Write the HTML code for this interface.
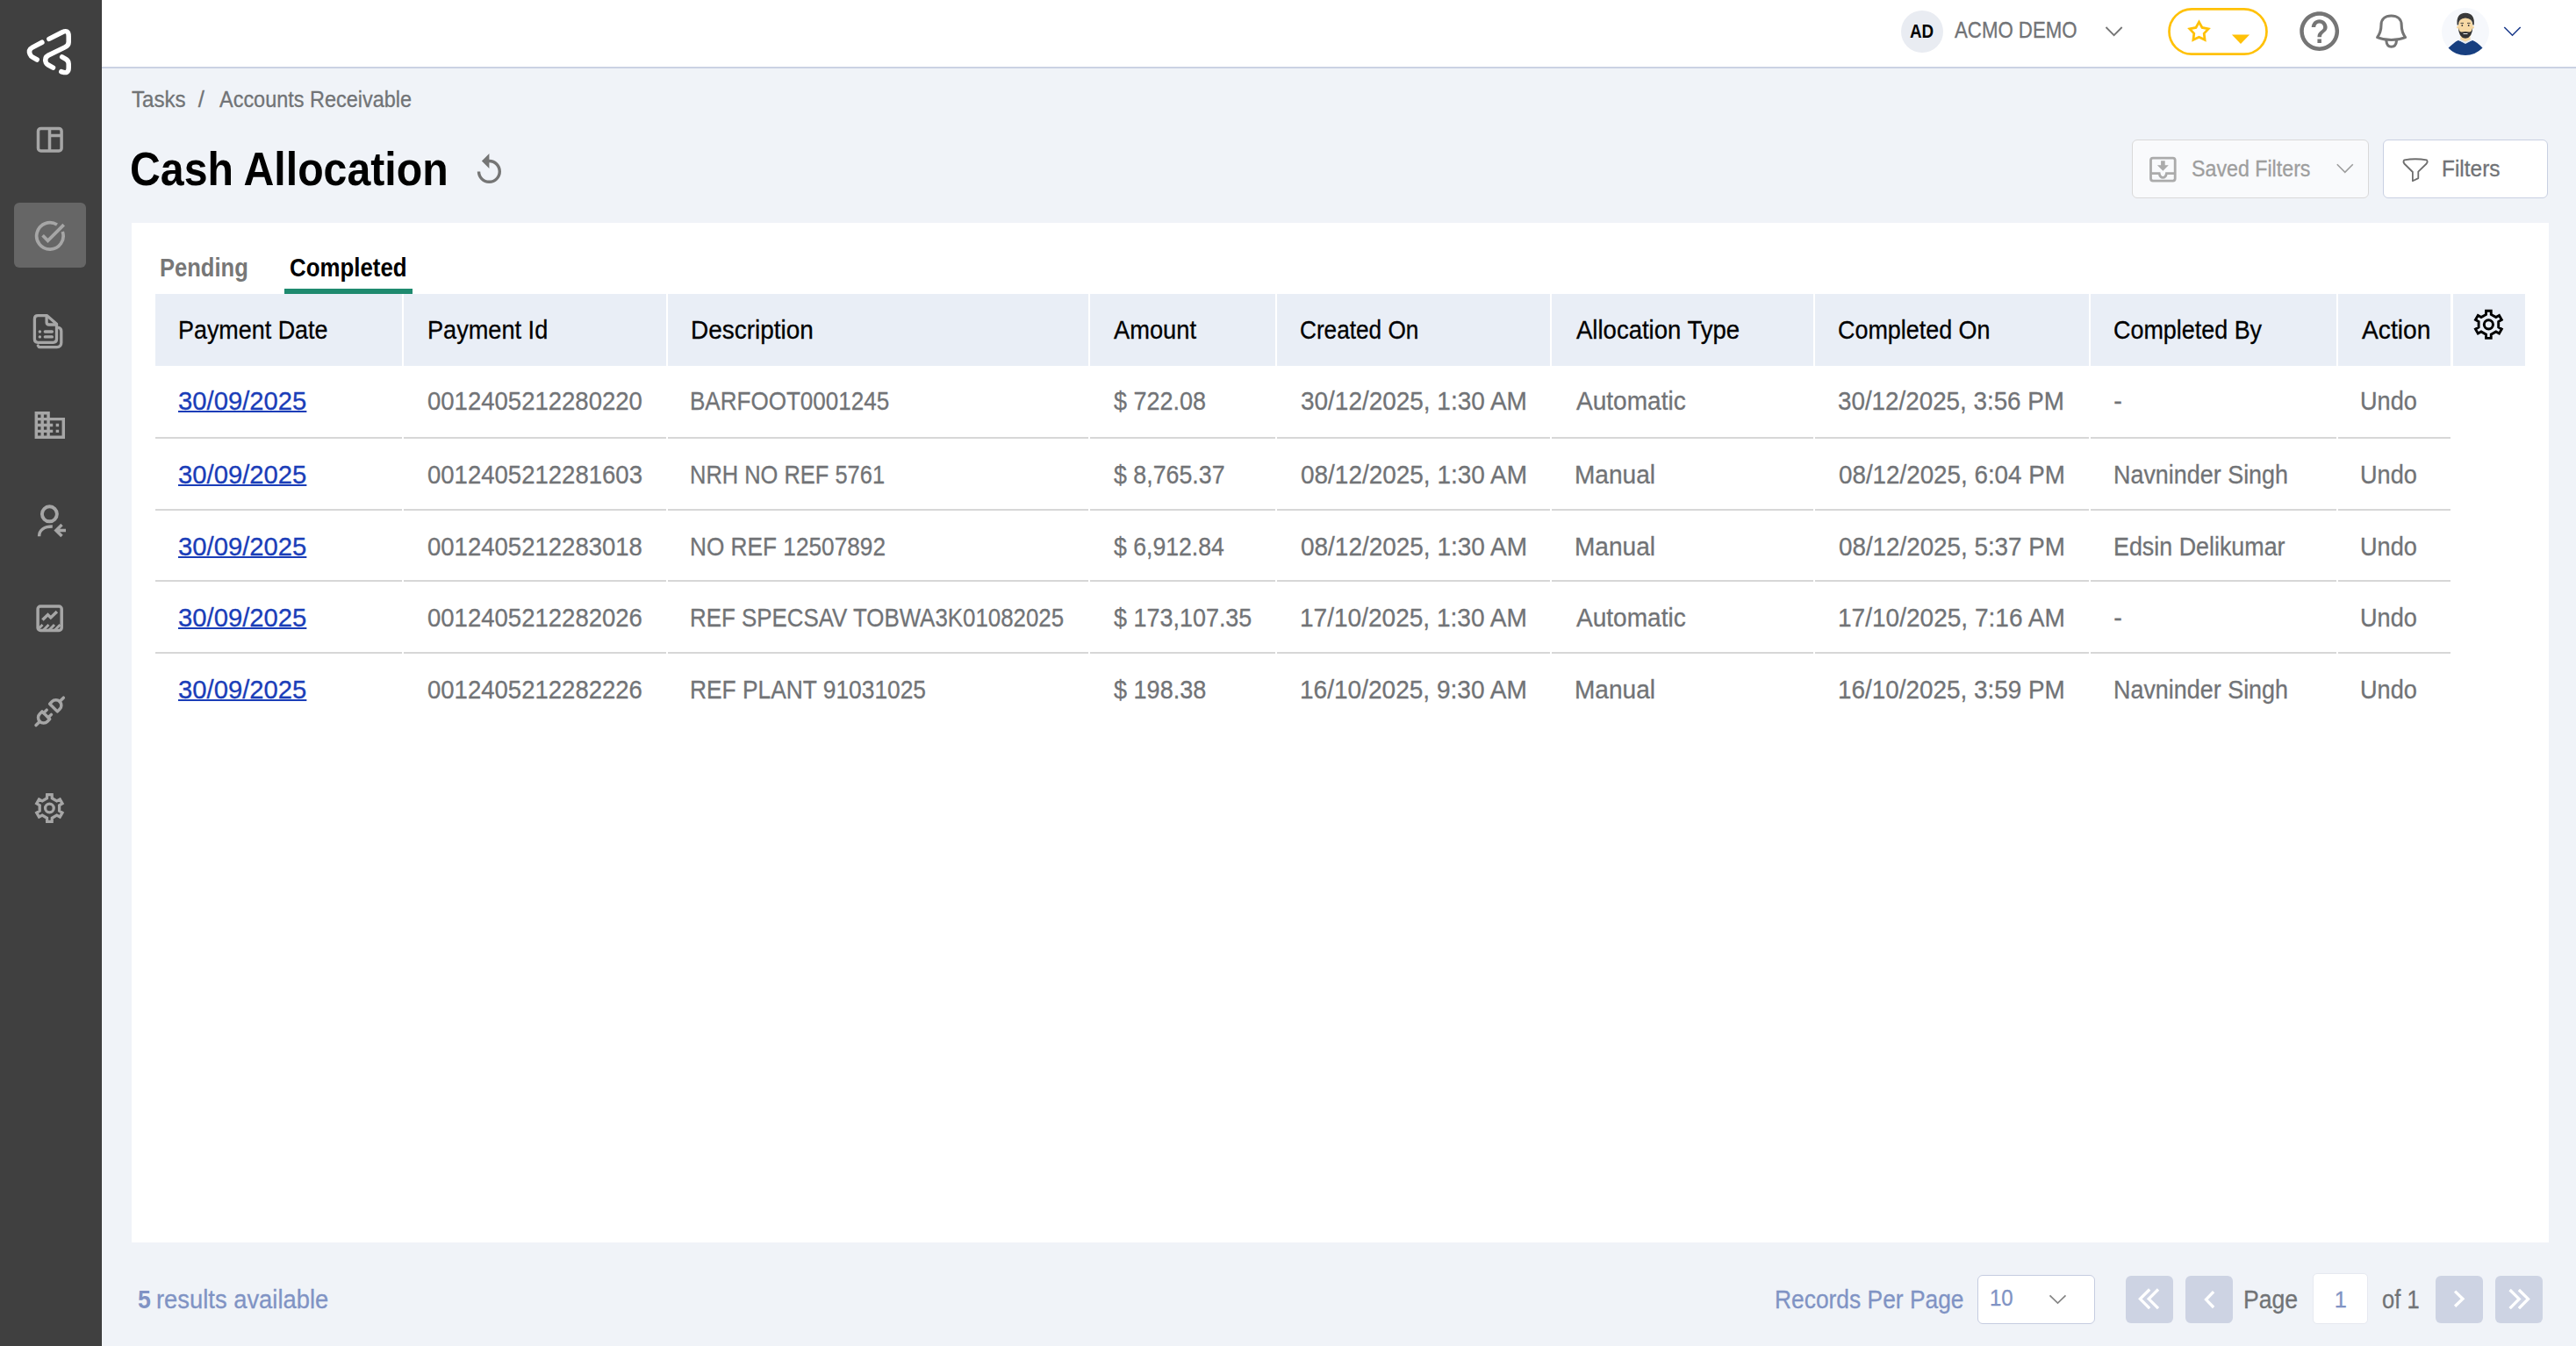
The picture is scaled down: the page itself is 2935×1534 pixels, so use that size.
<!DOCTYPE html>
<html><head><meta charset="utf-8"><title>Cash Allocation</title>
<style>
html,body{margin:0;padding:0;}
body{width:2935px;height:1534px;overflow:hidden;background:#F0F3F8;position:relative;font-family:"Liberation Sans",sans-serif;}
.a{position:absolute;}
.t{position:absolute;white-space:nowrap;line-height:1;transform-origin:0 0;font-family:"Liberation Sans",sans-serif;}
svg{position:absolute;left:0;top:0;overflow:visible;}
</style></head><body>
<!-- sidebar -->
<div class="a" style="left:0;top:0;width:116px;height:1534px;background:#404040;"></div>
<div class="a" style="left:115px;top:0;width:1px;height:1534px;background:#393939;"></div>
<div class="a" style="left:16px;top:231px;width:82px;height:74px;background:#666666;border-radius:6px;"></div>
<!-- header -->
<div class="a" style="left:116px;top:0;width:2819px;height:76px;background:#fff;"></div>
<div class="a" style="left:116px;top:76px;width:2819px;height:2px;background:#CBD2E3;"></div>
<!-- buttons -->
<div class="a" style="left:2429px;top:159px;width:268px;height:65px;background:#F9FAFC;border:1.5px solid #D9D9D9;border-radius:6px;"></div>
<div class="a" style="left:2715px;top:159px;width:186px;height:65px;background:#fff;border:1.5px solid #C9D0E2;border-radius:6px;"></div>
<!-- card -->
<div class="a" style="left:150px;top:254px;width:2754px;height:1162px;background:#fff;"></div>
<!-- tab underline -->
<div class="a" style="left:324px;top:329px;width:146px;height:5.5px;background:#1E8A6F;"></div>
<div class="a" style="left:177px;top:335px;width:2700px;height:82px;background:#E9EEF6;"></div>
<div class="a" style="left:458px;top:335px;width:2px;height:82px;background:#fff;"></div>
<div class="a" style="left:759px;top:335px;width:2px;height:82px;background:#fff;"></div>
<div class="a" style="left:1240px;top:335px;width:2px;height:82px;background:#fff;"></div>
<div class="a" style="left:1453px;top:335px;width:2px;height:82px;background:#fff;"></div>
<div class="a" style="left:1766px;top:335px;width:2px;height:82px;background:#fff;"></div>
<div class="a" style="left:2066px;top:335px;width:2px;height:82px;background:#fff;"></div>
<div class="a" style="left:2380px;top:335px;width:2px;height:82px;background:#fff;"></div>
<div class="a" style="left:2662px;top:335px;width:2px;height:82px;background:#fff;"></div>
<div class="a" style="left:2792px;top:335px;width:3px;height:82px;background:#fff;"></div>
<div class="a" style="left:177px;top:497.85px;width:2615px;height:1.7px;background:#D7D7D7;"></div>
<div class="a" style="left:458px;top:497.20px;width:2px;height:3px;background:#fff;"></div>
<div class="a" style="left:759px;top:497.20px;width:2px;height:3px;background:#fff;"></div>
<div class="a" style="left:1240px;top:497.20px;width:2px;height:3px;background:#fff;"></div>
<div class="a" style="left:1453px;top:497.20px;width:2px;height:3px;background:#fff;"></div>
<div class="a" style="left:1766px;top:497.20px;width:2px;height:3px;background:#fff;"></div>
<div class="a" style="left:2066px;top:497.20px;width:2px;height:3px;background:#fff;"></div>
<div class="a" style="left:2380px;top:497.20px;width:2px;height:3px;background:#fff;"></div>
<div class="a" style="left:2662px;top:497.20px;width:2px;height:3px;background:#fff;"></div>
<div class="a" style="left:177px;top:580.15px;width:2615px;height:1.7px;background:#D7D7D7;"></div>
<div class="a" style="left:458px;top:579.50px;width:2px;height:3px;background:#fff;"></div>
<div class="a" style="left:759px;top:579.50px;width:2px;height:3px;background:#fff;"></div>
<div class="a" style="left:1240px;top:579.50px;width:2px;height:3px;background:#fff;"></div>
<div class="a" style="left:1453px;top:579.50px;width:2px;height:3px;background:#fff;"></div>
<div class="a" style="left:1766px;top:579.50px;width:2px;height:3px;background:#fff;"></div>
<div class="a" style="left:2066px;top:579.50px;width:2px;height:3px;background:#fff;"></div>
<div class="a" style="left:2380px;top:579.50px;width:2px;height:3px;background:#fff;"></div>
<div class="a" style="left:2662px;top:579.50px;width:2px;height:3px;background:#fff;"></div>
<div class="a" style="left:177px;top:661.25px;width:2615px;height:1.7px;background:#D7D7D7;"></div>
<div class="a" style="left:458px;top:660.60px;width:2px;height:3px;background:#fff;"></div>
<div class="a" style="left:759px;top:660.60px;width:2px;height:3px;background:#fff;"></div>
<div class="a" style="left:1240px;top:660.60px;width:2px;height:3px;background:#fff;"></div>
<div class="a" style="left:1453px;top:660.60px;width:2px;height:3px;background:#fff;"></div>
<div class="a" style="left:1766px;top:660.60px;width:2px;height:3px;background:#fff;"></div>
<div class="a" style="left:2066px;top:660.60px;width:2px;height:3px;background:#fff;"></div>
<div class="a" style="left:2380px;top:660.60px;width:2px;height:3px;background:#fff;"></div>
<div class="a" style="left:2662px;top:660.60px;width:2px;height:3px;background:#fff;"></div>
<div class="a" style="left:177px;top:743.15px;width:2615px;height:1.7px;background:#D7D7D7;"></div>
<div class="a" style="left:458px;top:742.50px;width:2px;height:3px;background:#fff;"></div>
<div class="a" style="left:759px;top:742.50px;width:2px;height:3px;background:#fff;"></div>
<div class="a" style="left:1240px;top:742.50px;width:2px;height:3px;background:#fff;"></div>
<div class="a" style="left:1453px;top:742.50px;width:2px;height:3px;background:#fff;"></div>
<div class="a" style="left:1766px;top:742.50px;width:2px;height:3px;background:#fff;"></div>
<div class="a" style="left:2066px;top:742.50px;width:2px;height:3px;background:#fff;"></div>
<div class="a" style="left:2380px;top:742.50px;width:2px;height:3px;background:#fff;"></div>
<div class="a" style="left:2662px;top:742.50px;width:2px;height:3px;background:#fff;"></div>
<!-- footer controls -->
<div class="a" style="left:2253px;top:1452.5px;width:131.5px;height:54px;background:#fff;border:1.5px solid #C5CCE0;border-radius:6px;"></div>
<div class="a" style="left:2422px;top:1454px;width:53.5px;height:53.5px;background:#CDD3E3;border-radius:6px;"></div>
<div class="a" style="left:2490px;top:1454px;width:53.5px;height:53.5px;background:#CDD3E3;border-radius:6px;"></div>
<div class="a" style="left:2634.5px;top:1451px;width:63px;height:58px;background:#fff;border:1px solid #E6E9F0;border-radius:5px;box-sizing:border-box;"></div>
<div class="a" style="left:2775px;top:1454px;width:53.5px;height:53.5px;background:#CDD3E3;border-radius:6px;"></div>
<div class="a" style="left:2843px;top:1454px;width:53.5px;height:53.5px;background:#CDD3E3;border-radius:6px;"></div>
<svg width="116" height="100" viewBox="0 0 116 100"><g fill="none" stroke="#fff" stroke-width="5.5" stroke-linecap="round" stroke-linejoin="round" transform="translate(0.3 0.8)"><path d="M47.6 47.4 L36.5 53.3 Q31.6 56 34 61.3 Q34.8 63.3 36.8 64.4 L41.9 67.2"/><path d="M55.6 43.6 L70.6 35.9 Q77.9 32.4 77.9 40.4 L77.9 47.1 Q77.9 50.9 73.6 53.1 L54.9 62.2 Q49.8 65 52.1 70.8 Q52.8 72.2 54.6 73.2 L60.2 76.4"/><path d="M70.4 64 L75.1 66.8 Q77.9 68.6 77.9 72 L77.9 76.4 Q77.9 83.3 70.9 81.4 L69.5 80.8"/></g></svg>
<svg width="116" height="1000"><g fill="none" stroke="#A6A6A6" stroke-width="3.5"><rect x="43.5" y="146.4" width="26.6" height="25.5" rx="3"/><path d="M56.5 146.4 V171.9 M56.5 154.6 H70.1"/><path d="M71.28 263.98 A15.2 15.2 0 1 1 65.0 256.04" stroke-width="3.7"/><path d="M48.6 268.2 L54.5 274.3 L72.7 256.1" stroke-width="3.7"/><path d="M53.3 359.6 H43.2 Q39.4 359.6 39.4 363.4 V386.5 Q39.4 390.3 43.2 390.3 H60.7 Q64.5 390.3 64.5 386.5 V369.2 Z" stroke-width="3.3" stroke-linejoin="round"/><path d="M53.1 359.8 V367.2 Q53.1 370 55.9 370 H64.3" stroke-width="3.3"/><path d="M66.6 373.3 Q69.8 373.9 69.8 377.5 V390.6 Q69.8 395.6 64.8 395.6 H45.6 Q43.9 395.6 43.3 394" stroke-width="3.3" stroke-linecap="round"/><path d="M45.3 378 H45.5 M45.3 383.9 H45.5 M51.3 378 H59.4 M51.3 383.9 H59.4" stroke-width="3.3" stroke-linecap="round"/><circle cx="56.4" cy="585.8" r="8.5" stroke-width="3.9"/><path d="M44.6 611.2 C44.6 604 50.5 599.9 59.8 599.9" stroke-width="3.5"/><path d="M70.5 597.9 L63.9 604.4 L70.5 611 M63.9 604.4 H75" stroke-width="3.5"/><rect x="43.1" y="691.1" width="27.1" height="27.3" rx="3"/><path d="M48.4 706.6 L54.5 700.6 L57.8 703.9 L64.9 697" stroke-width="3.5"/><path d="M44.5 716 L48.5 712 M49.5 718 L55.5 712 M56 718 L62 712 M62.5 718 L68.5 712" stroke-width="3"/><g transform="translate(35.8 790) scale(1.74)" stroke-width="2" stroke-linecap="round" stroke-linejoin="round"><path d="M7 12l5 5l-1.5 1.5a3.536 3.536 0 1 1 -5 -5l1.5 -1.5z"/><path d="M17 12l-5 -5l1.5 -1.5a3.536 3.536 0 1 1 5 5l-1.5 1.5z"/><path d="M3 21l2.5 -2.5"/><path d="M18.5 5.5l2.5 -2.5"/><path d="M10 11l-2 2"/><path d="M13 14l-2 2"/></g><path d="M53.65 905.70 L59.15 905.70 L59.32 909.75 L64.68 912.85 L68.28 910.97 L71.03 915.73 L67.60 917.90 L67.60 924.10 L71.03 926.27 L68.28 931.03 L64.68 929.15 L59.32 932.25 L59.15 936.30 L53.65 936.30 L53.48 932.25 L48.12 929.15 L44.52 931.03 L41.77 926.27 L45.20 924.10 L45.20 917.90 L41.77 915.73 L44.52 910.97 L48.12 912.85 L53.48 909.75 Z" stroke-width="3.3" stroke-linejoin="miter"/><circle cx="56.4" cy="921" r="4.85" stroke-width="3.3"/></g><g transform="translate(36.16 463.84) scale(1.72)"><path fill="#A6A6A6" d="M12 7V3H2v18h20V7H12zM6 19H4v-2h2v2zm0-4H4v-2h2v2zm0-4H4V9h2v2zm0-4H4V5h2v2zm4 12H8v-2h2v2zm0-4H8v-2h2v2zm0-4H8V9h2v2zm0-4H8V5h2v2zm10 12h-8v-2h2v-2h-2v-2h2v-2h-2V9h8v10zm-2-8h-2v2h2v-2zm0 4h-2v2h2v-2z"/></g></svg>
<svg width="2935" height="1534"><circle cx="2190" cy="36" r="24" fill="#E9ECF2"/><path d="M2399.5 31 L2408.6 40.2 L2417.7 31" fill="none" stroke="#757575" stroke-width="1.8"/><rect x="2471.5" y="10.4" width="111" height="51.2" rx="25.6" fill="#fff" stroke="#FFC107" stroke-width="2.7"/><path d="M2505.50 25.10 L2509.03 31.45 L2516.15 32.84 L2511.21 38.15 L2512.08 45.36 L2505.50 42.30 L2498.92 45.36 L2499.79 38.15 L2494.85 32.84 L2501.97 31.45 Z" fill="none" stroke="#FFC107" stroke-width="2.8" stroke-linejoin="miter" stroke-miterlimit="6"/><path d="M2542.9 39.6 L2563.1 39.6 L2553 50.1 Z" fill="#FFC107"/><g transform="translate(2615.8 8.7) scale(2.24)"><path fill="#757575" d="M11 18h2v-2h-2v2zm1-16C6.48 2 2 6.48 2 12s4.48 10 10 10 10-4.48 10-10S17.52 2 12 2zm0 18c-4.41 0-8-3.59-8-8s3.59-8 8-8 8 3.59 8 8-3.59 8-8 8zm0-14c-2.21 0-4 1.79-4 4h2c0-1.1.9-2 2-2s2 .9 2 2c0 2-3 1.75-3 5h2c0-2.25 3-2.5 3-5 0-2.21-1.79-4-4-4z"/></g><g fill="none" stroke="#757575" stroke-width="3.1" stroke-linejoin="round"><path d="M2708.6 42.6 C2712.3 37.5 2713 34 2713 28.5 C2713 21.5 2717.8 18 2724.5 18 C2731.2 18 2736.2 21.5 2736.2 28.5 C2736.2 34 2736.9 37.5 2740.6 42.6 C2731 46.4 2718.2 46.4 2708.6 42.6 Z"/><path d="M2718.8 46 C2719.2 51 2721.2 53.3 2724.6 53.3 C2728 53.3 2730.2 51 2730.6 46"/></g><defs><clipPath id="avc"><circle cx="2809" cy="36" r="27"/></clipPath></defs><circle cx="2809" cy="36" r="27" fill="#F6F8FC"/><g clip-path="url(#avc)"><path d="M2787 57 Q2798 46.5 2801 46 L2809 49 L2817 46 Q2821 46.5 2831 57 Q2822 64 2809 64 Q2796 64 2787 57 Z" fill="#173F80"/><path d="M2801.5 46 L2805 42 H2813 L2816.5 46 L2809 50 Z" fill="#E4EAF3"/><path d="M2803.5 40 H2814.5 V45 L2809 47.5 L2803.5 45 Z" fill="#F7D9A4"/><ellipse cx="2809" cy="30" rx="8.3" ry="10.5" fill="#F7D9A4"/><circle cx="2800.6" cy="31" r="1.6" fill="#F7D9A4"/><circle cx="2817.4" cy="31" r="1.6" fill="#F7D9A4"/><path d="M2799.6 28.5 Q2798.2 14.8 2809 14.7 Q2820 14.8 2818.8 28.5 L2817.4 28.5 Q2817.2 21.2 2809 20.6 Q2801 21.2 2801 28.5 Z" fill="#3A3A3A"/><path d="M2801 31 Q2801 43 2809 43.8 Q2817 43 2817.3 31 Q2816 37 2813 36.5 Q2809 35.5 2805 36.5 Q2802 37 2801 31 Z" fill="#333"/><circle cx="2805.3" cy="29" r="0.9" fill="#333"/><circle cx="2812.7" cy="29" r="0.9" fill="#333"/><path d="M2803.5 26.4 H2807 M2811 26.4 H2814.5" stroke="#333" stroke-width="0.9"/><path d="M2806.5 38.5 H2811.5" stroke="#EEE" stroke-width="1"/></g><path d="M2853.3 31 L2862.5 40.2 L2871.7 31" fill="none" stroke="#1B3B8B" stroke-width="1.6"/><g transform="translate(537 173.3) scale(1.7)"><path fill="#757575" d="M12 5V1L7 6l5 5V7c3.31 0 6 2.69 6 6s-2.69 6-6 6-6-2.69-6-6H4c0 4.42 3.58 8 8 8s8-3.58 8-8-3.58-8-8-8z"/></g><g fill="none" stroke="#ABABAB" stroke-width="2.8"><path d="M2453 180.1 H2475.7 Q2478.2 180.1 2478.2 182.6 V203.6 Q2478.2 206.1 2475.7 206.1 H2453 Q2450.5 206.1 2450.5 203.6 V182.6 Q2450.5 180.1 2453 180.1 Z"/><path d="M2450.5 197.7 H2460.2 Q2461 202.3 2464.3 202.3 Q2467.6 202.3 2468.4 197.7 H2478.2"/></g><path d="M2462.1 183.2 H2466.7 V188.2 H2470.8 L2464.4 194.7 L2457.9 188.2 H2462.1 Z" fill="#ABABAB"/><path d="M2662.8 187.2 L2671.8 196.4 L2680.8 187.2" fill="none" stroke="#9E9E9E" stroke-width="1.6"/><path d="M2739.3 182.3 Q2751.9 180.2 2764.9 182.3 Q2766.5 184.5 2764.7 186.5 L2755.3 195.6 V203.1 L2748.9 206.2 V196 L2739.3 186.5 Q2737.7 184.5 2739.3 182.3 Z" fill="none" stroke="#6E6E6E" stroke-width="1.8" stroke-linejoin="round"/><path d="M2832.55 354.20 L2838.25 354.20 L2838.28 358.41 L2843.82 361.61 L2847.48 359.53 L2850.33 364.47 L2846.70 366.60 L2846.70 373.00 L2850.33 375.13 L2847.48 380.07 L2843.82 377.99 L2838.28 381.19 L2838.25 385.40 L2832.55 385.40 L2832.52 381.19 L2826.98 377.99 L2823.32 380.07 L2820.47 375.13 L2824.10 373.00 L2824.10 366.60 L2820.47 364.47 L2823.32 359.53 L2826.98 361.61 L2832.52 358.41 Z" fill="none" stroke="#000" stroke-width="2.9"/><circle cx="2835.4" cy="369.8" r="5.1" fill="none" stroke="#000" stroke-width="3"/><path d="M2335.5 1476.3 L2344.5 1485 L2353.5 1476.3" fill="none" stroke="#858585" stroke-width="1.7"/><g fill="none" stroke="#fff" stroke-width="3.3"><path d="M2449.2 1469.5 L2438.4 1480.3 L2449.2 1491.1 M2459 1469.5 L2448.2 1480.3 L2459 1491.1"/><path d="M2522.1 1472.2 L2513.5 1481.1 L2522.1 1490"/><path d="M2797.1 1471.6 L2806 1480.3 L2797.1 1488.8"/><path d="M2859.6 1470 L2870.2 1480.4 L2859.6 1491.1 M2869.9 1470 L2880.5 1480.4 L2869.9 1491.1"/></g></svg>
<div class='t' style='left:2175.51px;top:25.71px;font-size:21.4px;font-weight:700;color:#000;transform:scaleX(0.8798);'>AD</div>
<div class='t' style='left:2227.46px;top:22.39px;font-size:25.3px;font-weight:400;color:#717376;transform:scaleX(0.8788);-webkit-text-stroke:0.3px currentColor;'>ACMO DEMO</div>
<div class='t' style='left:150.06px;top:100.56px;font-size:25.7px;font-weight:400;color:#717376;transform:scaleX(0.9390);-webkit-text-stroke:0.3px currentColor;'>Tasks</div>
<div class='t' style='left:225.79px;top:100.56px;font-size:25.7px;font-weight:400;color:#717376;-webkit-text-stroke:0.3px currentColor;'>/</div>
<div class='t' style='left:249.79px;top:100.56px;font-size:25.7px;font-weight:400;color:#717376;transform:scaleX(0.9135);-webkit-text-stroke:0.3px currentColor;'>Accounts Receivable</div>
<div class='t' style='left:147.98px;top:165.95px;font-size:53px;font-weight:700;color:#000;transform:scaleX(0.9098);'>Cash Allocation</div>
<div class='t' style='left:2497.39px;top:180.33px;font-size:25px;font-weight:400;color:#9E9E9E;transform:scaleX(0.9286);-webkit-text-stroke:0.3px currentColor;'>Saved Filters</div>
<div class='t' style='left:2782.14px;top:180.33px;font-size:25px;font-weight:400;color:#717376;transform:scaleX(0.9774);-webkit-text-stroke:0.3px currentColor;'>Filters</div>
<div class='t' style='left:182.18px;top:290.65px;font-size:29px;font-weight:700;color:#777777;transform:scaleX(0.8809);'>Pending</div>
<div class='t' style='left:330.49px;top:290.65px;font-size:29px;font-weight:700;color:#000;transform:scaleX(0.8914);'>Completed</div>
<div class='t' style='left:202.86px;top:362.45px;font-size:29px;font-weight:400;color:#000;transform:scaleX(0.9280);-webkit-text-stroke:0.3px currentColor;'>Payment Date</div>
<div class='t' style='left:486.53px;top:362.45px;font-size:29px;font-weight:400;color:#000;transform:scaleX(0.9355);-webkit-text-stroke:0.3px currentColor;'>Payment Id</div>
<div class='t' style='left:786.62px;top:362.45px;font-size:29px;font-weight:400;color:#000;transform:scaleX(0.9639);-webkit-text-stroke:0.3px currentColor;'>Description</div>
<div class='t' style='left:1269.04px;top:362.45px;font-size:29px;font-weight:400;color:#000;transform:scaleX(0.9402);-webkit-text-stroke:0.3px currentColor;'>Amount</div>
<div class='t' style='left:1481.46px;top:362.45px;font-size:29px;font-weight:400;color:#000;transform:scaleX(0.9026);-webkit-text-stroke:0.3px currentColor;'>Created On</div>
<div class='t' style='left:1795.56px;top:362.45px;font-size:29px;font-weight:400;color:#000;transform:scaleX(0.9490);-webkit-text-stroke:0.3px currentColor;'>Allocation Type</div>
<div class='t' style='left:2094.45px;top:362.45px;font-size:29px;font-weight:400;color:#000;transform:scaleX(0.9277);-webkit-text-stroke:0.3px currentColor;'>Completed On</div>
<div class='t' style='left:2408.24px;top:362.45px;font-size:29px;font-weight:400;color:#000;transform:scaleX(0.9283);-webkit-text-stroke:0.3px currentColor;'>Completed By</div>
<div class='t' style='left:2691.17px;top:362.45px;font-size:29px;font-weight:400;color:#000;transform:scaleX(0.9723);-webkit-text-stroke:0.3px currentColor;'>Action</div>
<div class='t' style='left:203.37px;top:442.52px;font-size:28.8px;font-weight:400;color:#1A3DB8;transform:scaleX(1.0155);-webkit-text-stroke:0.3px currentColor;text-decoration:underline;text-decoration-thickness:1.6px;text-underline-offset:1.4px;'>30/09/2025</div>
<div class='t' style='left:486.83px;top:442.52px;font-size:28.8px;font-weight:400;color:#717376;transform:scaleX(0.9556);-webkit-text-stroke:0.3px currentColor;'>0012405212280220</div>
<div class='t' style='left:785.93px;top:442.52px;font-size:28.8px;font-weight:400;color:#717376;transform:scaleX(0.9041);-webkit-text-stroke:0.3px currentColor;'>BARFOOT0001245</div>
<div class='t' style='left:1268.67px;top:442.52px;font-size:28.8px;font-weight:400;color:#717376;transform:scaleX(0.9355);-webkit-text-stroke:0.3px currentColor;'>$ 722.08</div>
<div class='t' style='left:1481.73px;top:442.52px;font-size:28.8px;font-weight:400;color:#717376;transform:scaleX(0.9703);-webkit-text-stroke:0.3px currentColor;'>30/12/2025, 1:30 AM</div>
<div class='t' style='left:1795.57px;top:442.52px;font-size:28.8px;font-weight:400;color:#717376;transform:scaleX(0.9738);-webkit-text-stroke:0.3px currentColor;'>Automatic</div>
<div class='t' style='left:2094.49px;top:442.52px;font-size:28.8px;font-weight:400;color:#717376;transform:scaleX(0.9648);-webkit-text-stroke:0.3px currentColor;'>30/12/2025, 3:56 PM</div>
<div class='t' style='left:2408.22px;top:442.52px;font-size:28.8px;font-weight:400;color:#717376;-webkit-text-stroke:0.3px currentColor;'>-</div>
<div class='t' style='left:2689.18px;top:442.52px;font-size:28.8px;font-weight:400;color:#717376;transform:scaleX(0.9427);-webkit-text-stroke:0.3px currentColor;'>Undo</div>
<div class='t' style='left:203.37px;top:526.52px;font-size:28.8px;font-weight:400;color:#1A3DB8;transform:scaleX(1.0155);-webkit-text-stroke:0.3px currentColor;text-decoration:underline;text-decoration-thickness:1.6px;text-underline-offset:1.4px;'>30/09/2025</div>
<div class='t' style='left:486.80px;top:526.52px;font-size:28.8px;font-weight:400;color:#717376;transform:scaleX(0.9561);-webkit-text-stroke:0.3px currentColor;'>0012405212281603</div>
<div class='t' style='left:786.05px;top:526.52px;font-size:28.8px;font-weight:400;color:#717376;transform:scaleX(0.8839);-webkit-text-stroke:0.3px currentColor;'>NRH NO REF 5761</div>
<div class='t' style='left:1268.67px;top:526.52px;font-size:28.8px;font-weight:400;color:#717376;transform:scaleX(0.9295);-webkit-text-stroke:0.3px currentColor;'>$ 8,765.37</div>
<div class='t' style='left:1481.81px;top:526.52px;font-size:28.8px;font-weight:400;color:#717376;transform:scaleX(0.9704);-webkit-text-stroke:0.3px currentColor;'>08/12/2025, 1:30 AM</div>
<div class='t' style='left:1793.52px;top:526.52px;font-size:28.8px;font-weight:400;color:#717376;transform:scaleX(0.9742);-webkit-text-stroke:0.3px currentColor;'>Manual</div>
<div class='t' style='left:2094.59px;top:526.52px;font-size:28.8px;font-weight:400;color:#717376;transform:scaleX(0.9645);-webkit-text-stroke:0.3px currentColor;'>08/12/2025, 6:04 PM</div>
<div class='t' style='left:2407.56px;top:526.52px;font-size:28.8px;font-weight:400;color:#717376;transform:scaleX(0.9348);-webkit-text-stroke:0.3px currentColor;'>Navninder Singh</div>
<div class='t' style='left:2689.18px;top:526.52px;font-size:28.8px;font-weight:400;color:#717376;transform:scaleX(0.9427);-webkit-text-stroke:0.3px currentColor;'>Undo</div>
<div class='t' style='left:203.37px;top:608.52px;font-size:28.8px;font-weight:400;color:#1A3DB8;transform:scaleX(1.0155);-webkit-text-stroke:0.3px currentColor;text-decoration:underline;text-decoration-thickness:1.6px;text-underline-offset:1.4px;'>30/09/2025</div>
<div class='t' style='left:486.80px;top:608.52px;font-size:28.8px;font-weight:400;color:#717376;transform:scaleX(0.9558);-webkit-text-stroke:0.3px currentColor;'>0012405212283018</div>
<div class='t' style='left:785.90px;top:608.52px;font-size:28.8px;font-weight:400;color:#717376;transform:scaleX(0.9105);-webkit-text-stroke:0.3px currentColor;'>NO REF 12507892</div>
<div class='t' style='left:1268.67px;top:608.52px;font-size:28.8px;font-weight:400;color:#717376;transform:scaleX(0.9249);-webkit-text-stroke:0.3px currentColor;'>$ 6,912.84</div>
<div class='t' style='left:1481.81px;top:608.52px;font-size:28.8px;font-weight:400;color:#717376;transform:scaleX(0.9704);-webkit-text-stroke:0.3px currentColor;'>08/12/2025, 1:30 AM</div>
<div class='t' style='left:1793.52px;top:608.52px;font-size:28.8px;font-weight:400;color:#717376;transform:scaleX(0.9742);-webkit-text-stroke:0.3px currentColor;'>Manual</div>
<div class='t' style='left:2094.59px;top:608.52px;font-size:28.8px;font-weight:400;color:#717376;transform:scaleX(0.9645);-webkit-text-stroke:0.3px currentColor;'>08/12/2025, 5:37 PM</div>
<div class='t' style='left:2407.56px;top:608.52px;font-size:28.8px;font-weight:400;color:#717376;transform:scaleX(0.9328);-webkit-text-stroke:0.3px currentColor;'>Edsin Delikumar</div>
<div class='t' style='left:2689.18px;top:608.52px;font-size:28.8px;font-weight:400;color:#717376;transform:scaleX(0.9427);-webkit-text-stroke:0.3px currentColor;'>Undo</div>
<div class='t' style='left:203.37px;top:689.52px;font-size:28.8px;font-weight:400;color:#1A3DB8;transform:scaleX(1.0155);-webkit-text-stroke:0.3px currentColor;text-decoration:underline;text-decoration-thickness:1.6px;text-underline-offset:1.4px;'>30/09/2025</div>
<div class='t' style='left:486.80px;top:689.52px;font-size:28.8px;font-weight:400;color:#717376;transform:scaleX(0.9558);-webkit-text-stroke:0.3px currentColor;'>0012405212282026</div>
<div class='t' style='left:785.96px;top:689.52px;font-size:28.8px;font-weight:400;color:#717376;transform:scaleX(0.8984);-webkit-text-stroke:0.3px currentColor;'>REF SPECSAV TOBWA3K01082025</div>
<div class='t' style='left:1268.67px;top:689.52px;font-size:28.8px;font-weight:400;color:#717376;transform:scaleX(0.9358);-webkit-text-stroke:0.3px currentColor;'>$ 173,107.35</div>
<div class='t' style='left:1480.83px;top:689.52px;font-size:28.8px;font-weight:400;color:#717376;transform:scaleX(0.9739);-webkit-text-stroke:0.3px currentColor;'>17/10/2025, 1:30 AM</div>
<div class='t' style='left:1795.57px;top:689.52px;font-size:28.8px;font-weight:400;color:#717376;transform:scaleX(0.9738);-webkit-text-stroke:0.3px currentColor;'>Automatic</div>
<div class='t' style='left:2093.61px;top:689.52px;font-size:28.8px;font-weight:400;color:#717376;transform:scaleX(0.9737);-webkit-text-stroke:0.3px currentColor;'>17/10/2025, 7:16 AM</div>
<div class='t' style='left:2408.22px;top:689.52px;font-size:28.8px;font-weight:400;color:#717376;-webkit-text-stroke:0.3px currentColor;'>-</div>
<div class='t' style='left:2689.18px;top:689.52px;font-size:28.8px;font-weight:400;color:#717376;transform:scaleX(0.9427);-webkit-text-stroke:0.3px currentColor;'>Undo</div>
<div class='t' style='left:203.37px;top:771.52px;font-size:28.8px;font-weight:400;color:#1A3DB8;transform:scaleX(1.0155);-webkit-text-stroke:0.3px currentColor;text-decoration:underline;text-decoration-thickness:1.6px;text-underline-offset:1.4px;'>30/09/2025</div>
<div class='t' style='left:486.80px;top:771.52px;font-size:28.8px;font-weight:400;color:#717376;transform:scaleX(0.9558);-webkit-text-stroke:0.3px currentColor;'>0012405212282226</div>
<div class='t' style='left:785.84px;top:771.52px;font-size:28.8px;font-weight:400;color:#717376;transform:scaleX(0.9150);-webkit-text-stroke:0.3px currentColor;'>REF PLANT 91031025</div>
<div class='t' style='left:1268.67px;top:771.52px;font-size:28.8px;font-weight:400;color:#717376;transform:scaleX(0.9390);-webkit-text-stroke:0.3px currentColor;'>$ 198.38</div>
<div class='t' style='left:1480.83px;top:771.52px;font-size:28.8px;font-weight:400;color:#717376;transform:scaleX(0.9739);-webkit-text-stroke:0.3px currentColor;'>16/10/2025, 9:30 AM</div>
<div class='t' style='left:1793.52px;top:771.52px;font-size:28.8px;font-weight:400;color:#717376;transform:scaleX(0.9742);-webkit-text-stroke:0.3px currentColor;'>Manual</div>
<div class='t' style='left:2093.62px;top:771.52px;font-size:28.8px;font-weight:400;color:#717376;transform:scaleX(0.9681);-webkit-text-stroke:0.3px currentColor;'>16/10/2025, 3:59 PM</div>
<div class='t' style='left:2407.56px;top:771.52px;font-size:28.8px;font-weight:400;color:#717376;transform:scaleX(0.9348);-webkit-text-stroke:0.3px currentColor;'>Navninder Singh</div>
<div class='t' style='left:2689.18px;top:771.52px;font-size:28.8px;font-weight:400;color:#717376;transform:scaleX(0.9427);-webkit-text-stroke:0.3px currentColor;'>Undo</div>
<div class='t' style='left:156.51px;top:1467.27px;font-size:29.1px;font-weight:700;color:#8093C4;transform:scaleX(0.9169);'>5</div>
<div class='t' style='left:177.83px;top:1467.27px;font-size:29.1px;font-weight:400;color:#8093C4;transform:scaleX(0.9405);-webkit-text-stroke:0.3px currentColor;'>results available</div>
<div class='t' style='left:2021.57px;top:1466.97px;font-size:29.1px;font-weight:400;color:#8093C4;transform:scaleX(0.9066);-webkit-text-stroke:0.3px currentColor;'>Records Per Page</div>
<div class='t' style='left:2266.77px;top:1466.79px;font-size:25.3px;font-weight:400;color:#8093C4;transform:scaleX(0.9488);-webkit-text-stroke:0.3px currentColor;'>10</div>
<div class='t' style='left:2556.47px;top:1467.37px;font-size:29.1px;font-weight:400;color:#717376;transform:scaleX(0.9146);-webkit-text-stroke:0.3px currentColor;'>Page</div>
<div class='t' style='left:2659.69px;top:1468.79px;font-size:25.3px;font-weight:400;color:#8093C4;-webkit-text-stroke:0.3px currentColor;'>1</div>
<div class='t' style='left:2714.10px;top:1467.37px;font-size:29.1px;font-weight:400;color:#717376;transform:scaleX(0.8783);-webkit-text-stroke:0.3px currentColor;'>of 1</div>
</body></html>
